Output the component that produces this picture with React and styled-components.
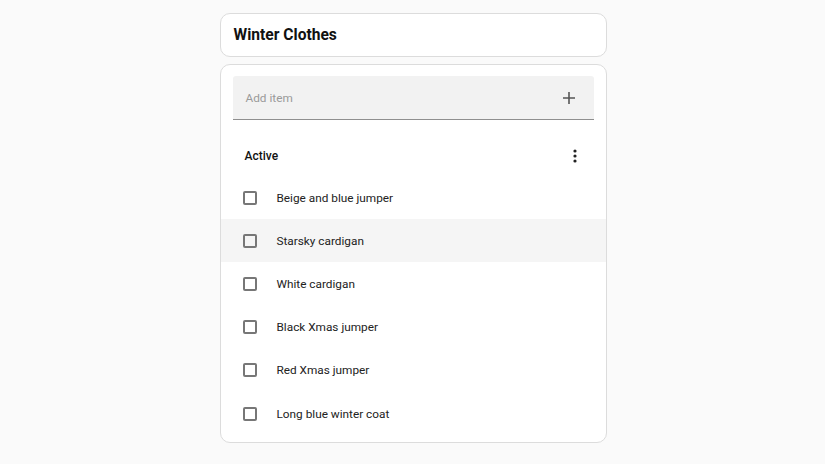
import React from "react";
import styled, { createGlobalStyle } from "styled-components";

const GlobalStyle = createGlobalStyle`
  * { box-sizing: border-box; }
  body {
    margin: 0;
    background: #fafafa;
    font-family: Roboto, "Noto Sans", sans-serif;
    color: #202124;
  }
`;

const items = [
  "Beige and blue jumper",
  "Starsky cardigan",
  "White cardigan",
  "Black Xmas jumper",
  "Red Xmas jumper",
  "Long blue winter coat",
];

function PlusIcon() {
  return (
    <svg width="14" height="14" viewBox="0 0 14 14">
      <path d="M7 1v12M1 7h12" stroke="#555" strokeWidth="1.6" fill="none" />
    </svg>
  );
}

function MoreIcon() {
  return (
    <svg width="4" height="14" viewBox="0 0 4 14">
      <circle cx="2" cy="2" r="1.6" fill="#222" />
      <circle cx="2" cy="7" r="1.6" fill="#222" />
      <circle cx="2" cy="12" r="1.6" fill="#222" />
    </svg>
  );
}

export default function App() {
  return (
    <>
      <GlobalStyle />
      <Page>
        <Column>
          <TitleCard>
            <Title>Winter Clothes</Title>
          </TitleCard>
          <ListCard>
            <AddField>
              <Placeholder>Add item</Placeholder>
              <IconButton>
                <PlusIcon />
              </IconButton>
            </AddField>
            <SectionHeader>
              <SectionTitle>Active</SectionTitle>
              <IconButton>
                <MoreIcon />
              </IconButton>
            </SectionHeader>
            <List>
              {items.map((name, i) => (
                <Row key={name} hovered={i === 1}>
                  <Checkbox />
                  <Label>{name}</Label>
                </Row>
              ))}
            </List>
          </ListCard>
        </Column>
      </Page>
    </>
  );
}

const Page = styled.div`
  display: flex;
  justify-content: center;
  padding-top: 13px;
  min-height: 464px;
`;

const Column = styled.div`
  width: 387px;
  margin-left: 1px;
  display: flex;
  flex-direction: column;
  gap: 7px;
`;

const Card = styled.div`
  background: #fff;
  border: 1px solid #dcdcdc;
  border-radius: 10px;
`;

const TitleCard = styled(Card)`
  height: 44px;
  display: flex;
  align-items: center;
  padding: 0 13px;
`;

const Title = styled.h1`
  margin: 0;
  font-size: 15.6px;
  font-weight: 700;
  color: #111;
`;

const ListCard = styled(Card)`
  padding: 11px 0 7px;
`;

const AddField = styled.div`
  margin: 0 12px;
  height: 44px;
  background: #f2f2f2;
  border-bottom: 1px solid #8f8f8f;
  border-radius: 3px 3px 0 0;
  display: flex;
  align-items: center;
  justify-content: space-between;
  padding: 0 17px 0 13px;
`;

const Placeholder = styled.span`
  font-size: 11.8px;
  color: #9a9a9a;
`;

const IconButton = styled.div`
  display: flex;
  align-items: center;
  justify-content: center;
  width: 16px;
  height: 16px;
`;

const SectionHeader = styled.div`
  margin-top: 16px;
  height: 40px;
  display: flex;
  align-items: center;
  justify-content: space-between;
  padding: 0 23px 0 24px;
`;

const SectionTitle = styled.span`
  font-size: 12px;
  font-weight: 500;
  color: #111;
`;

const List = styled.div`
  display: flex;
  flex-direction: column;
`;

const Row = styled.div`
  height: 43.2px;
  display: flex;
  align-items: center;
  padding-left: 22px;
  background: ${({ hovered }) => (hovered ? "#f5f5f5" : "transparent")};
`;

const Checkbox = styled.span`
  width: 14px;
  height: 14px;
  border: 2px solid #777;
  border-radius: 2px;
  flex-shrink: 0;
`;

const Label = styled.span`
  margin-left: 20px;
  font-size: 11.8px;
  color: #222;
`;
